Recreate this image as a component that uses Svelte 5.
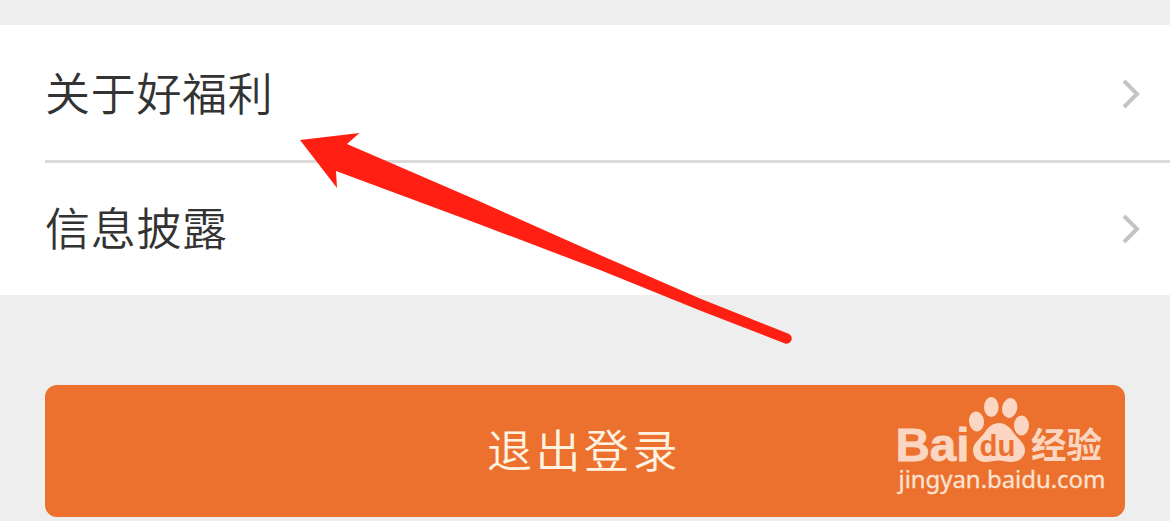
<script lang="ts">
	const rows = ['关于好福利', '信息披露']
</script>

<main>
	<ul>
		{#each rows as row}
			<li>
				<span>{row}</span>
				<svg class="chevron" width="20" height="32" viewBox="0 0 20 32" aria-hidden="true">
					<path d="M3 3 16 16 3 29" />
				</svg>
			</li>
		{/each}
	</ul>

	<button>退出登录</button>

	<svg class="arrow" viewBox="0 0 1170 521" aria-hidden="true">
		<path d="M300 140 359.500 133 347 144 480 201.500 600 255 700 298.500 788 333.500A5 5 0 0 1 785 343.500L700 310.500 600 270 480 224.500 336 171 337 188Z" />
	</svg>

	<svg class="watermark" width="220" height="110" viewBox="890 390 220 110">
		<text class="brand" x="895.500" y="460.500" textLength="74" lengthAdjust="spacingAndGlyphs">Bai</text>
		<ellipse cx="976.500" cy="421.500" rx="7.500" ry="10" transform="rotate(-8 976.500 421.500)" />
		<ellipse cx="991.300" cy="407" rx="7.300" ry="10" />
		<ellipse cx="1009.700" cy="408" rx="7.500" ry="10" transform="rotate(12 1009.700 408)" />
		<ellipse cx="1021.500" cy="425.500" rx="7.500" ry="10" />
		<path d="M999 423C1005 423 1010 427 1013 432 1017 438 1025 443 1025 450 1025 458 1018 462 1011 462 1006 462 1003 460.500 999 460.500 994 460.500 990 462 985 462 978 462 973 457 973 450 973 443 981 438 985 432 988 427 993 423 999 423Z" />
		<text class="du" x="979.500" y="455.500" textLength="36" lengthAdjust="spacingAndGlyphs">du</text>
		<text class="cjk" x="1031" y="458" textLength="71" lengthAdjust="spacingAndGlyphs">经验</text>
		<text class="url" x="898.500" y="488" textLength="207" lengthAdjust="spacing">jingyan.baidu.com</text>
	</svg>
</main>

<style>
	:global(body) {
		margin: 0;
		background: #eee;
	}

	main {
		position: relative;
		box-sizing: border-box;
		height: 521px;
		padding-top: 25px;
		overflow: hidden;
		background: #eee;
		font-family: 'Noto Sans CJK SC', sans-serif;
	}

	ul {
		margin: 0;
		padding: 0 0 0 45px;
		list-style: none;
		background: #fff;
	}

	li {
		display: flex;
		align-items: center;
		justify-content: space-between;
		box-sizing: border-box;
		height: 135px;
		padding-right: 29px;
		color: #333;
		font-size: 45px;
		font-weight: 350;
		letter-spacing: 0.7px;
		line-height: 66px;
	}

	li + li {
		padding-bottom: 3px;
		border-top: 3px solid #dadada;
	}

	li span {
		padding-bottom: 2px;
	}

	.chevron {
		margin-top: 3px;
		fill: none;
		stroke: #c4c4c4;
		stroke-width: 4;
	}

	button {
		display: block;
		width: 1080px;
		height: 132px;
		margin: 90px 0 0 45px;
		padding: 0 2px 4px 0;
		border: 0;
		border-radius: 12px;
		background: #ec712f;
		color: #fff3e2;
		font: 350 45px/128px 'Noto Sans CJK SC', sans-serif;
		letter-spacing: 3.5px;
	}

	.arrow {
		position: absolute;
		inset: 0;
		width: 1170px;
		height: 521px;
		fill: #ff2013;
		pointer-events: none;
	}

	.watermark {
		position: absolute;
		top: 390px;
		left: 890px;
		fill: #fbd7c3;
		pointer-events: none;
	}

	.brand {
		stroke: #fbd7c3;
		stroke-width: 0.8;
		font: 700 47px 'Liberation Sans', sans-serif;
	}

	.du {
		fill: #ec712f;
		font: 700 29px 'Liberation Sans', sans-serif;
	}

	.cjk {
		font: 700 35px 'Noto Sans CJK SC', sans-serif;
	}

	.url {
		fill: #fde3d2;
		stroke: #fde3d2;
		stroke-width: 0.3;
		font: 400 24px 'Noto Sans', sans-serif;
	}
</style>
